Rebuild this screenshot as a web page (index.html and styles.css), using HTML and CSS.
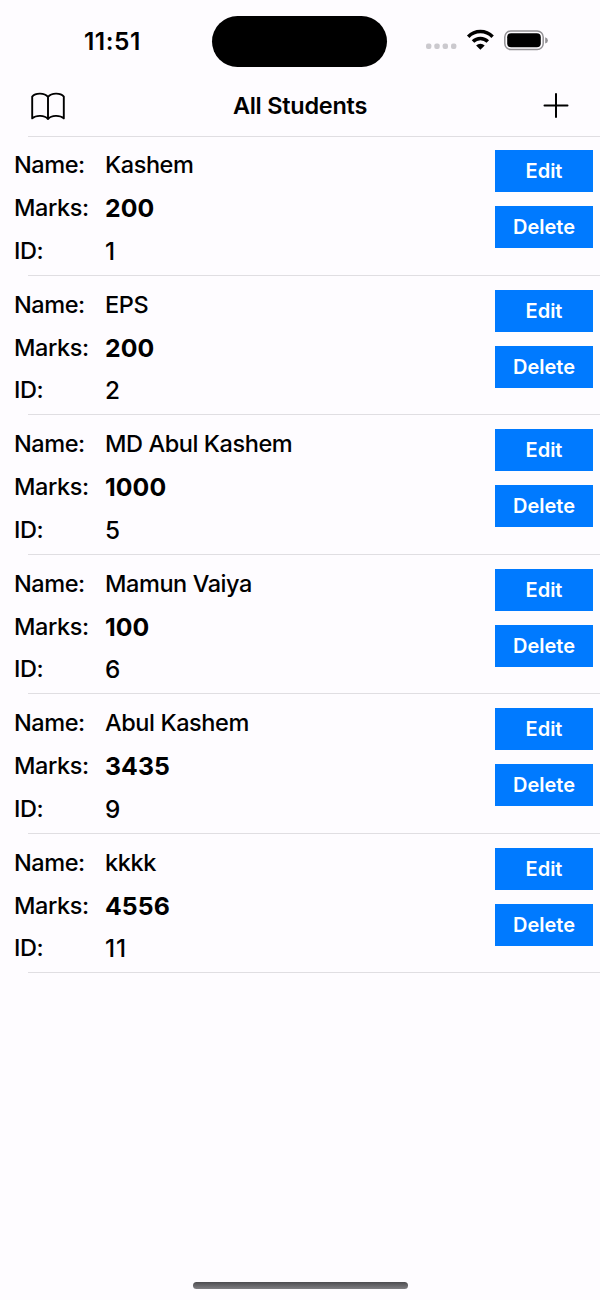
FILE: index.html
```html
<!DOCTYPE html>
<html lang="en">
<head>
<meta charset="utf-8">
<title>All Students</title>
<link rel="stylesheet" href="styles.css">
</head>
<body>
<div class="screen">
  <header class="status">
    <time class="clock">11:51</time>
    <div class="island"></div>
    <svg class="indicators" width="126" height="28" viewBox="0 0 126 28">
      <g fill="#cbc9ce"><rect x="2" y="17.5" width="5.4" height="5.4" rx="2"/><rect x="10.3" y="17.5" width="5.4" height="5.4" rx="2"/><rect x="18.6" y="17.5" width="5.4" height="5.4" rx="2"/><rect x="27" y="17.5" width="5.4" height="5.4" rx="2"/></g>
      <g fill="none" stroke="#000" stroke-width="3.5"><path d="M44.2 10.7a17.2 17.2 0 0 1 24.4 0"/><path d="M49 15.5a10.4 10.4 0 0 1 14.8 0"/></g>
      <path d="M56.4 23.7l-4.3-4.2a6.2 6.2 0 0 1 8.6 0z"/>
      <rect x="80.8" y="4.9" width="38.4" height="18.6" rx="6" fill="none" stroke="#929094" stroke-width="1.5"/>
      <rect x="83.2" y="7.2" width="33.6" height="14" rx="4"/>
      <path d="M121.2 11.2q2.7 1 2.7 3.2t-2.7 3.2z" fill="#929094"/>
    </svg>
  </header>
  <nav class="navbar">
    <svg width="36" height="30" viewBox="0 0 36 30" fill="none" stroke="#000" stroke-width="1.9" stroke-linejoin="round" stroke-linecap="round">
      <path d="M18 6v22M18 6C14.5 1.6 5.500 1.600 2.200 5.600v21.800C6 24 14.500 24 18 28C21.500 24 30 24 33.800 27.400v-21.800C30.500 1.600 21.500 1.600 18 6"/>
    </svg>
    <h1 class="title">All Students</h1>
    <svg width="26" height="26" viewBox="0 0 26 26" fill="none" stroke="#000" stroke-width="2" stroke-linecap="round"><path d="M13 1v23M1.500 12.500h23"/></svg>
  </nav>
  <main class="list">
    <article class="student"><dl class="info"><dt>Name:</dt><dd>Kashem</dd><dt>Marks:</dt><dd class="marks">200</dd><dt>ID:</dt><dd class="id">1</dd></dl><div class="actions"><button>Edit</button><button>Delete</button></div></article>
    <article class="student"><dl class="info"><dt>Name:</dt><dd>EPS</dd><dt>Marks:</dt><dd class="marks">200</dd><dt>ID:</dt><dd class="id">2</dd></dl><div class="actions"><button>Edit</button><button>Delete</button></div></article>
    <article class="student"><dl class="info"><dt>Name:</dt><dd>MD Abul Kashem</dd><dt>Marks:</dt><dd class="marks">1000</dd><dt>ID:</dt><dd class="id">5</dd></dl><div class="actions"><button>Edit</button><button>Delete</button></div></article>
    <article class="student"><dl class="info"><dt>Name:</dt><dd>Mamun Vaiya</dd><dt>Marks:</dt><dd class="marks">100</dd><dt>ID:</dt><dd class="id">6</dd></dl><div class="actions"><button>Edit</button><button>Delete</button></div></article>
    <article class="student"><dl class="info"><dt>Name:</dt><dd>Abul Kashem</dd><dt>Marks:</dt><dd class="marks">3435</dd><dt>ID:</dt><dd class="id">9</dd></dl><div class="actions"><button>Edit</button><button>Delete</button></div></article>
    <article class="student"><dl class="info"><dt>Name:</dt><dd>kkkk</dd><dt>Marks:</dt><dd class="marks">4556</dd><dt>ID:</dt><dd class="id">11</dd></dl><div class="actions"><button>Edit</button><button>Delete</button></div></article>
  </main>
  <div class="home"></div>
</div>
</body>
</html>
```
FILE: styles.css
```css
* { box-sizing: border-box; }
body { margin: 0; background: #fefcff; color: #000; font-family: Inter, "Liberation Sans", sans-serif; }
.screen { width: 600px; height: 1300px; display: flex; flex-direction: column; overflow: hidden; }
.status { height: 76px; padding: 15.5px 50px 0 84px; display: grid; grid-template-columns: 128.4px 175.1px 1fr; align-items: start; }
.clock { font-size: 24.5px; font-weight: 600; line-height: 30px; margin-top: 10.5px; letter-spacing: 0.5px; }
.island { height: 51.5px; border-radius: 26px; background: #000; }
.indicators { justify-self: end; margin-top: 10.5px; }
.navbar { height: 60px; padding: 0 31px 0 30px; display: grid; grid-template-columns: 36px 1fr 26px; align-items: center; }
.title { margin: 0; padding-right: 9px; text-align: center; font-size: 23.5px; line-height: 30px; font-weight: 600; letter-spacing: -0.25px; }
.list { background: linear-gradient(#e0dee2, #e0dee2) 28px 0 / 572px 1px no-repeat; }
.student { height: 139.5px; display: flex; justify-content: space-between; padding: 8px 7px 0 14px; background: linear-gradient(#e0dee2, #e0dee2) 28px 100% / 572px 1px no-repeat; }
.info { margin: 0; display: grid; grid-template-columns: 91px auto; grid-template-rows: 43px 42.5px 42.5px; line-height: 42px; font-size: 23.5px; font-weight: 450; letter-spacing: -0.42px; }
.info dd { margin: 0; white-space: nowrap; }
.info .marks { font-size: 24.8px; font-weight: 700; letter-spacing: 0.1px; }
.info .id { font-size: 24.3px; letter-spacing: 1px; }
.actions { width: 98px; padding-top: 6px; display: flex; flex-direction: column; gap: 14px; }
.actions button { height: 42px; padding: 0; border: 0; background: #007aff; color: #fff; font: 600 20px/42px Inter, "Liberation Sans", sans-serif; }
.home { width: 215px; height: 7px; margin: auto auto 11px 192.5px; border-radius: 4px; background: linear-gradient(#4d4c50, #807f83); }
```
